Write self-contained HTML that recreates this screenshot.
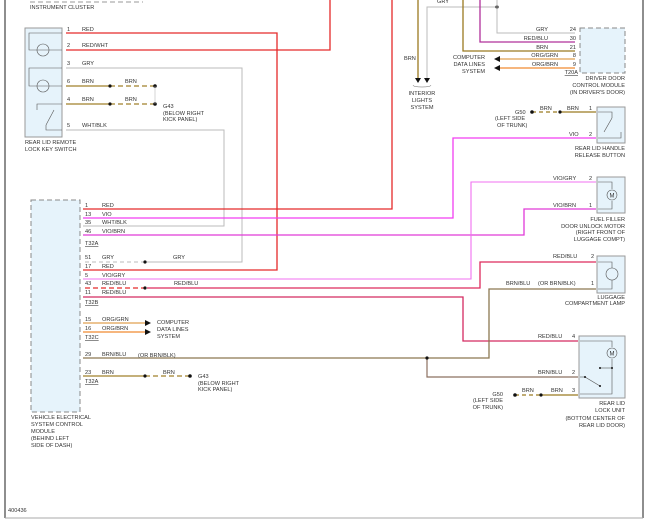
<!DOCTYPE html>
<html><head><meta charset="utf-8"><style>
html,body{margin:0;padding:0;background:#fff;}
svg{display:block;}
text{font-family:"Liberation Sans",sans-serif;font-size:5.6px;fill:#333;}
</style></head><body>
<svg width="650" height="521" viewBox="0 0 650 521" xmlns="http://www.w3.org/2000/svg">
<rect width="650" height="521" fill="#fff"/>
<!-- frame -->
<line x1="5" y1="0" x2="5" y2="518" stroke="#444" stroke-width="1.2"/>
<line x1="643" y1="0" x2="643" y2="518" stroke="#444" stroke-width="1.2"/>
<line x1="5" y1="518" x2="643" y2="518" stroke="#aaa" stroke-width="1"/>
<line x1="30" y1="2" x2="143" y2="2" stroke="#999" stroke-dasharray="5,3"/>
<text x="30" y="9">INSTRUMENT CLUSTER</text>

<!-- rear lid remote switch -->
<rect x="25" y="28" width="37" height="109" fill="#e6f3fb" stroke="#999"/>
<polyline points="62,33 29,33 29,50 62,50" fill="none" stroke="#555" stroke-width="0.6"/>
<circle cx="43" cy="50" r="6" fill="none" stroke="#555" stroke-width="0.6"/>
<polyline points="62,68 29,68 29,86 62,86" fill="none" stroke="#555" stroke-width="0.6"/>
<circle cx="43" cy="86" r="6" fill="none" stroke="#555" stroke-width="0.6"/>
<polyline points="62,104 37,104 37,110" fill="none" stroke="#555" stroke-width="0.6"/>
<line x1="46" y1="125" x2="54" y2="110" stroke="#555" stroke-width="0.6"/>
<polyline points="46,125 46,130 62,130" fill="none" stroke="#555" stroke-width="0.6"/>
<text x="25" y="144">REAR LID REMOTE</text>
<text x="25" y="151">LOCK KEY SWITCH</text>

<!-- wires from switch -->
<polyline points="66,33 277,33 277,270 83,270" fill="none" stroke="#e52a2a" stroke-width="1.3"/>
<polyline points="66,50 330,50 330,0" fill="none" stroke="#e52a2a" stroke-width="1.3"/>
<polyline points="66,68 242,68 242,262 145,262" fill="none" stroke="#bbb" stroke-width="1"/>
<line x1="85" y1="262" x2="145" y2="262" stroke="#bbb" stroke-dasharray="4,3"/>
<circle cx="145" cy="262" r="1.6" fill="#111"/>
<line x1="66" y1="86" x2="110" y2="86" stroke="#a0812a" stroke-width="1.3"/>
<line x1="110" y1="86" x2="155" y2="86" stroke="#a0812a" stroke-width="1.3" stroke-dasharray="5,3"/>
<line x1="66" y1="104" x2="110" y2="104" stroke="#a0812a" stroke-width="1.3"/>
<line x1="110" y1="104" x2="155" y2="104" stroke="#a0812a" stroke-width="1.3" stroke-dasharray="5,3"/>
<circle cx="110" cy="86" r="1.6" fill="#111"/><circle cx="110" cy="104" r="1.6" fill="#111"/>
<circle cx="155" cy="86" r="1.8" fill="#111"/><circle cx="155" cy="104" r="1.8" fill="#111"/>
<line x1="155" y1="86" x2="155" y2="104" stroke="#aaa" stroke-width="0.5"/>
<polyline points="66,130 224,130 224,226 83,226" fill="none" stroke="#bbb" stroke-width="1"/>
<g>
<text x="67" y="31">1</text><text x="82" y="31">RED</text>
<text x="67" y="47">2</text><text x="82" y="47">RED/WHT</text>
<text x="67" y="65">3</text><text x="82" y="65">GRY</text>
<text x="67" y="83">6</text><text x="82" y="83">BRN</text><text x="125" y="83">BRN</text>
<text x="67" y="101">4</text><text x="82" y="101">BRN</text><text x="125" y="101">BRN</text>
<text x="67" y="127">5</text><text x="82" y="127">WHT/BLK</text>
<text x="163" y="108">G43</text><text x="163" y="115">(BELOW RIGHT</text><text x="163" y="121">KICK PANEL)</text>
</g>

<!-- vehicle electrical module -->
<rect x="31" y="200" width="49" height="212" fill="#e6f3fb" stroke="#888" stroke-dasharray="5,3"/>
<text x="31" y="419">VEHICLE ELECTRICAL</text>
<text x="31" y="426">SYSTEM CONTROL</text>
<text x="31" y="433">MODULE</text>
<text x="31" y="440">(BEHIND LEFT</text>
<text x="31" y="447">SIDE OF DASH)</text>

<polyline points="83,209 392,209 392,0" fill="none" stroke="#e52a2a" stroke-width="1.3"/>
<polyline points="83,218 453,218 453,138 596,138" fill="none" stroke="#f23ef2" stroke-width="1.3"/>
<polyline points="83,235 524,235 524,209 596,209" fill="none" stroke="#e03ad8" stroke-width="1.3"/>
<polyline points="83,279 471,279 471,182 596,182" fill="none" stroke="#f070f0" stroke-width="1.1"/>
<line x1="85" y1="288" x2="145" y2="288" stroke="#e52a2a" stroke-width="1.3" stroke-dasharray="5,3"/>
<circle cx="145" cy="288" r="1.6" fill="#111"/>
<polyline points="147,288 480,288 480,262 596,262" fill="none" stroke="#dd2a5c" stroke-width="1.3"/>
<polyline points="83,297 463,297 463,341 578,341" fill="none" stroke="#d42a60" stroke-width="1.3"/>
<line x1="83" y1="323" x2="145" y2="323" stroke="#e0a050" stroke-width="1.3"/>
<line x1="83" y1="332" x2="145" y2="332" stroke="#f08a30" stroke-width="1.3"/>
<path d="M145,320 L151,323 L145,326Z M145,329 L151,332 L145,335Z" fill="#111"/>
<polyline points="83,358 489,358 489,289 596,289" fill="none" stroke="#8c7850" stroke-width="1.3"/>
<polyline points="427,358 427,377 578,377" fill="none" stroke="#8c7060" stroke-width="1.2"/>
<circle cx="427" cy="358" r="1.6" fill="#111"/>
<line x1="83" y1="376" x2="145" y2="376" stroke="#a0812a" stroke-width="1.3"/>
<line x1="145" y1="376" x2="190" y2="376" stroke="#a0812a" stroke-width="1.3" stroke-dasharray="5,3"/>
<circle cx="145" cy="376" r="1.6" fill="#111"/><circle cx="190" cy="376" r="1.8" fill="#111"/>
<g>
<text x="85" y="207">1</text><text x="102" y="207">RED</text>
<text x="85" y="216">13</text><text x="102" y="216">VIO</text>
<text x="85" y="224">35</text><text x="102" y="224">WHT/BLK</text>
<text x="85" y="233">46</text><text x="102" y="233">VIO/BRN</text>
<text x="85" y="245" text-decoration="underline">T32A</text>
<text x="85" y="259">51</text><text x="102" y="259">GRY</text><text x="173" y="259">GRY</text>
<text x="85" y="268">17</text><text x="102" y="268">RED</text>
<text x="85" y="277">5</text><text x="102" y="277">VIO/GRY</text>
<text x="85" y="285">43</text><text x="102" y="285">RED/BLU</text><text x="174" y="285">RED/BLU</text>
<text x="85" y="294">11</text><text x="102" y="294">RED/BLU</text>
<text x="85" y="304" text-decoration="underline">T32B</text>
<text x="85" y="321">15</text><text x="102" y="321">ORG/GRN</text>
<text x="85" y="330">16</text><text x="102" y="330">ORG/BRN</text>
<text x="85" y="339" text-decoration="underline">T32C</text>
<text x="157" y="324">COMPUTER</text><text x="157" y="331">DATA LINES</text><text x="157" y="338">SYSTEM</text>
<text x="85" y="356">29</text><text x="102" y="356">BRN/BLU</text><text x="138" y="357">(OR BRN/BLK)</text>
<text x="85" y="374">23</text><text x="102" y="374">BRN</text><text x="163" y="374">BRN</text>
<text x="85" y="383" text-decoration="underline">T32A</text>
<text x="198" y="378">G43</text><text x="198" y="385">(BELOW RIGHT</text><text x="198" y="391">KICK PANEL)</text>
<text x="8" y="512">400436</text>
</g>

<!-- top right -->
<polyline points="418,0 418,78" fill="none" stroke="#9a7a20" stroke-width="1.3"/>
<polyline points="497,7 427,7 427,78" fill="none" stroke="#bbb" stroke-width="1"/>
<circle cx="497" cy="7" r="1.6" fill="#111"/>
<polyline points="497,0 497,33 575,33" fill="none" stroke="#bbb" stroke-width="1"/>
<polyline points="480,0 480,42 575,42" fill="none" stroke="#b0309a" stroke-width="1.3"/>
<polyline points="463,0 463,51 575,51" fill="none" stroke="#9a7a20" stroke-width="1.3"/>
<line x1="497" y1="59" x2="575" y2="59" stroke="#e0a050" stroke-width="1.3"/>
<line x1="497" y1="68" x2="575" y2="68" stroke="#f08a30" stroke-width="1.3"/>
<path d="M494,59 L500,56 L500,62Z M494,68 L500,65 L500,71Z" fill="#111"/>
<path d="M415,78 L421,78 L418,83Z M424,78 L430,78 L427,83Z" fill="#111"/>
<path d="M413,85 Q413,87 422,87 Q431,87 431,85" fill="none" stroke="#666" stroke-width="0.5"/>
<text x="404" y="60">BRN</text><text x="437" y="3">GRY</text>
<text x="422" y="95" text-anchor="middle">INTERIOR</text>
<text x="422" y="102" text-anchor="middle">LIGHTS</text>
<text x="422" y="109" text-anchor="middle">SYSTEM</text>
<text x="485" y="59" text-anchor="end">COMPUTER</text>
<text x="485" y="66" text-anchor="end">DATA LINES</text>
<text x="485" y="73" text-anchor="end">SYSTEM</text>
<rect x="580" y="28" width="45" height="45" fill="#e6f3fb" stroke="#888" stroke-dasharray="5,3"/>
<g text-anchor="end">
<text x="548" y="31">GRY</text><text x="576" y="31">24</text>
<text x="548" y="40">RED/BLU</text><text x="576" y="40">30</text>
<text x="548" y="49">BRN</text><text x="576" y="49">21</text>
<text x="558" y="57">ORG/GRN</text><text x="576" y="57">8</text>
<text x="558" y="66">ORG/BRN</text><text x="576" y="66">9</text>
<text x="578" y="74" text-decoration="underline">T20A</text>
<text x="625" y="80">DRIVER DOOR</text>
<text x="625" y="87">CONTROL MODULE</text>
<text x="625" y="94">(IN DRIVER'S DOOR)</text>
</g>

<!-- rear lid handle -->
<rect x="597" y="107" width="28" height="36" fill="#e6f3fb" stroke="#999"/>
<polyline points="598,112 612,112 612,118" fill="none" stroke="#555" stroke-width="0.6"/>
<line x1="604" y1="132" x2="612" y2="118" stroke="#555" stroke-width="0.6"/>
<polyline points="621,132 621,138 598,138" fill="none" stroke="#555" stroke-width="0.6"/>
<line x1="560" y1="112" x2="596" y2="112" stroke="#9a7a20" stroke-width="1.3"/>
<line x1="532" y1="112" x2="560" y2="112" stroke="#9a7a20" stroke-width="1.3" stroke-dasharray="4,3"/>
<circle cx="560" cy="112" r="1.6" fill="#111"/><circle cx="532" cy="112" r="1.8" fill="#111"/>
<text x="540" y="110">BRN</text><text x="567" y="110">BRN</text><text x="589" y="110">1</text>
<text x="569" y="136">VIO</text><text x="589" y="136">2</text>
<text x="515" y="114">G50</text>
<text x="495" y="120">(LEFT SIDE</text><text x="497" y="127">OF TRUNK)</text>
<g text-anchor="end">
<text x="625" y="150">REAR LID HANDLE</text>
<text x="625" y="157">RELEASE BUTTON</text>
</g>

<!-- fuel filler -->
<rect x="597" y="177" width="28" height="36" fill="#e6f3fb" stroke="#999"/>
<polyline points="598,182 612,182 612,189" fill="none" stroke="#555" stroke-width="0.6"/>
<circle cx="612" cy="195" r="5" fill="none" stroke="#555" stroke-width="0.6"/>
<text x="612" y="197.5" text-anchor="middle" style="font-size:6px">M</text>
<polyline points="612,201 612,209 598,209" fill="none" stroke="#555" stroke-width="0.6"/>
<text x="553" y="180">VIO/GRY</text><text x="589" y="180">2</text>
<text x="553" y="207">VIO/BRN</text><text x="589" y="207">1</text>
<g text-anchor="end">
<text x="625" y="221">FUEL FILLER</text>
<text x="625" y="228">DOOR UNLOCK MOTOR</text>
<text x="625" y="234">(RIGHT FRONT OF</text>
<text x="625" y="241">LUGGAGE COMPT)</text>
</g>

<!-- luggage lamp -->
<rect x="597" y="256" width="28" height="37" fill="#e6f3fb" stroke="#999"/>
<polyline points="598,262 612,262 612,268" fill="none" stroke="#555" stroke-width="0.6"/>
<circle cx="612" cy="274" r="6" fill="none" stroke="#555" stroke-width="0.6"/>
<polyline points="612,280 612,289 598,289" fill="none" stroke="#555" stroke-width="0.6"/>
<text x="553" y="258">RED/BLU</text><text x="591" y="258">2</text>
<text x="506" y="285">BRN/BLU</text><text x="538" y="285">(OR BRN/BLK)</text><text x="591" y="285">1</text>
<g text-anchor="end">
<text x="625" y="299">LUGGAGE</text>
<text x="625" y="305">COMPARTMENT LAMP</text>
</g>

<!-- rear lid lock unit -->
<rect x="579" y="336" width="46" height="62" fill="#e6f3fb" stroke="#999"/>
<polyline points="580,341 612,341 612,347" fill="none" stroke="#555" stroke-width="0.6"/>
<circle cx="612" cy="353" r="5" fill="none" stroke="#555" stroke-width="0.6"/>
<text x="612" y="355.5" text-anchor="middle" style="font-size:6px">M</text>
<polyline points="612,359 612,394 580,394" fill="none" stroke="#555" stroke-width="0.6"/>
<line x1="600" y1="368" x2="612" y2="368" stroke="#555" stroke-width="0.6"/>
<circle cx="600" cy="368" r="1" fill="#111"/><circle cx="612" cy="368" r="1" fill="#111"/>
<line x1="580" y1="377" x2="585" y2="377" stroke="#555" stroke-width="0.6"/>
<line x1="585" y1="377" x2="600" y2="386" stroke="#555" stroke-width="0.6"/>
<circle cx="585" cy="377" r="1" fill="#111"/><circle cx="600" cy="386" r="1" fill="#111"/>
<line x1="541" y1="395" x2="578" y2="395" stroke="#9a7a20" stroke-width="1.3"/>
<line x1="515" y1="395" x2="541" y2="395" stroke="#9a7a20" stroke-width="1.3" stroke-dasharray="4,3"/>
<circle cx="541" cy="395" r="1.6" fill="#111"/><circle cx="515" cy="395" r="1.8" fill="#111"/>
<text x="538" y="338">RED/BLU</text><text x="572" y="338">4</text>
<text x="538" y="374">BRN/BLU</text><text x="572" y="374">2</text>
<text x="522" y="392">BRN</text><text x="551" y="392">BRN</text><text x="572" y="392">3</text>
<g text-anchor="end">
<text x="503" y="396">G50</text>
<text x="503" y="402">(LEFT SIDE</text>
<text x="503" y="409">OF TRUNK)</text>
<text x="625" y="405">REAR LID</text>
<text x="625" y="412">LOCK UNIT</text>
<text x="625" y="420">(BOTTOM CENTER OF</text>
<text x="625" y="427">REAR LID DOOR)</text>
</g>
</svg>
</body></html>
